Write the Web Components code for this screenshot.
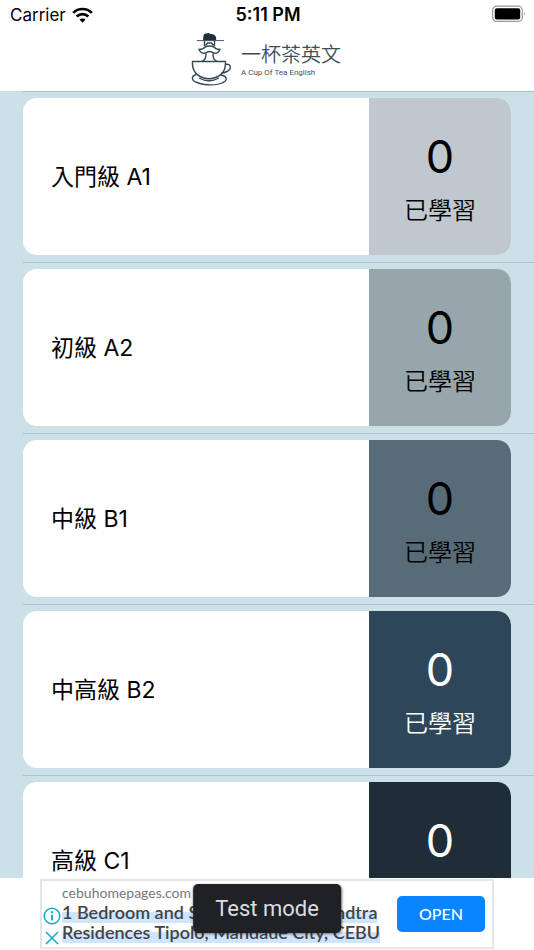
<!DOCTYPE html>
<html lang="zh-Hant">
<head>
<meta charset="utf-8">
<meta name="viewport" content="width=device-width, initial-scale=1">
<title>一杯茶英文</title>
<style>
    html, body{
        height: 100%;
        margin: 0;
    }
    body{
        font-family: Inter, "Noto Sans CJK TC", sans-serif;
        color: #000;
        background-color: #fff;
    }
</style>
</head>
<body>
<tea-app></tea-app>

<template id="status-bar">
    <style>
        :host{
            display: grid;
            grid-template-columns: 1fr auto 1fr;
            align-items: center;
            height: 30px;
            padding: 0 8px 0 10px;
            font-size: 17px;
            line-height: 30px;
        }
        .carrier{
            display: flex;
            align-items: center;
            gap: 6px;
        }
        .time{
            font-size: 18px;
            font-weight: 600;
        }
        .battery{
            justify-self: end;
            margin-bottom: 2px;
        }
        svg{
            display: block;
        }
    </style>
    <div class="carrier">
        <span><slot name="carrier"></slot></span>
        <svg width="21" height="16" viewBox="0 0 22 16" aria-hidden="true">
            <g fill="none" stroke="#000" stroke-width="2.8">
                <path d="M1.2 5.8C6.6.4 15.4.4 20.8 5.8"/>
                <path d="M4.9 9.5c3.4-3.3 8.800-3.300 12.200 0"/>
            </g>
            <path d="M11 16l-3.200-3.200c1.800-1.600 4.600-1.600 6.400 0z"/>
        </svg>
    </div>
    <div class="time"><slot name="time"></slot></div>
    <svg class="battery" width="34" height="18" viewBox="0 0 34 18" aria-hidden="true">
        <rect x=".7" y="1.200" width="29.600" height="15.200" rx="4" fill="none" stroke="#999" stroke-width="1.200"/>
        <rect x="2.800" y="3.200" width="25.400" height="11.200" rx="2"/>
        <path d="M32 6.500q1.800 2.300 0 4.600z" fill="#999"/>
    </svg>
</template>

<template id="brand-header">
    <style>
        :host{
            display: flex;
            justify-content: center;
            gap: 8px;
            height: 61px;
            padding-right: 2px;
            color: #3d4f5a;
        }
        svg{
            display: block;
            margin-top: 3px;
        }
        .name{
            padding-top: 12px;
        }
        h1{
            margin: 0;
            font-size: 20px;
            font-weight: 350;
            line-height: 26px;
        }
        p{
            margin: 0;
            font-family: Roboto, sans-serif;
            font-size: 8px;
            line-height: 10px;
        }
    </style>
    <svg width="42" height="54" viewBox="0 0 42 54" fill="none" stroke="#344852" stroke-width="1.400" aria-hidden="true">
        <!-- hat -->
        <path d="M12 7.500L12.500 2.500q.5-2.500 3-2 2-1 4 .5 3-.5 4.500 1.500 1.800 2 1 5z" fill="#1f303b" stroke="none"/>
        <path d="M6 7.600h27" stroke-width=".9"/>
        <!-- face and moustache -->
        <path d="M13.500 8v5M23.500 8v5M14.500 12.500l2-2.500h4l2 2.500"/>
        <path d="M8 16.500q4 0 6-2.500 4.500-2 9 0 2 2.500 6 2.500-1.500 4-6 3.800-2.500-1.800-4.500-1.800t-4.500 1.800q-4.500.2-6-3.800z"/>
        <!-- neck -->
        <path d="M15 20.500q.5 6-4 8M22 20.500q-.5 6 4 8"/>
        <!-- cup and saucer -->
        <path d="M1.500 28.500h33c.5 9-4.500 14.500-11.500 16.500q-5 1.500-10 0c-7-2-12-7.500-11.500-16.500z"/>
        <path d="M34 31.500c7-1.500 6.500 5 2 7-2 1-4 1.500-5.500 1.500"/>
        <path d="M5.500 41.500C-.5 43 .5 48 6 49.500c7 3.200 20 3.200 26 0 5-2.500 4-6.500-2.500-7.500"/>
        <path d="M8 45q10 5.500 20 0"/>
    </svg>
    <div class="name">
        <h1><slot name="title"></slot></h1>
        <p><slot name="subtitle"></slot></p>
    </div>
</template>

<template id="level-card">
    <style>
        :host{
            display: block;
            margin-left: 23px;
            padding: 6px 23px 7px 0;
            border-top: 1px solid #adbfc7;
        }
        a{
            display: flex;
            height: 157px;
            border-radius: 14px;
            overflow: hidden;
            color: #000;
            background-color: #fff;
            text-decoration: none;
        }
        .level{
            flex: 1;
            align-self: center;
            padding-left: 28px;
            font-size: 23px;
            line-height: 32px;
        }
        .learned{
            display: flex;
            flex-direction: column;
            align-items: center;
            justify-content: center;
            gap: 8px;
            width: 142px;
            padding-top: 4px;
            box-sizing: border-box;
            color: var(--card-text, #000);
            background-color: var(--card-color);
            font-size: 24px;
            font-weight: 350;
            line-height: 36px;
        }
        .count{
            font-size: 45px;
            font-weight: 400;
            line-height: 56px;
        }
    </style>
    <a href="#">
        <span class="level"><slot></slot></span>
        <span class="learned">
            <span class="count"></span>
            <span>已學習</span>
        </span>
    </a>
</template>

<template id="ad-banner">
    <style>
        :host{
            position: relative;
            display: flex;
            justify-content: center;
            padding: 1px 0;
            background-color: #fff;
        }
        .ad{
            display: flex;
            align-items: center;
            box-sizing: border-box;
            width: 85%;
            height: 70px;
            padding-right: 7px;
            border: 2px solid #e6e6e6;
            font-family: Lato, sans-serif;
        }
        .icons{
            display: flex;
            flex-direction: column;
            align-items: center;
            gap: 5px;
            width: 20px;
            padding-top: 24px;
        }
        .icons button{
            padding: 0;
            border: 0;
            background: none;
        }
        svg{
            display: block;
        }
        .copy{
            flex: 1;
            padding-bottom: 2px;
            white-space: nowrap;
        }
        .site{
            color: #777;
            font-size: 14px;
            line-height: 18px;
        }
        .headline{
            color: #444;
            font-size: 18px;
            font-weight: 600;
            line-height: 20px;
        }
        .headline a{
            color: inherit;
            text-decoration: none;
            background: linear-gradient(transparent 50%, #cfe5ff 50%);
            -webkit-box-decoration-break: clone;
            box-decoration-break: clone;
        }
        .open{
            width: 88px;
            height: 36px;
            padding: 0 0 2px;
            border: 0;
            border-radius: 5px;
            color: #fff;
            background-color: #0a84ff;
            font: 500 16px Lato, sans-serif;
        }
        /* sits over the ad */
        .toast{
            position: absolute;
            left: 50%;
            bottom: 17px;
            transform: translateX(-50%);
            padding: 0 22px;
            border-radius: 5px;
            color: #dcdde0;
            background-color: #202125;
            box-shadow: 0 1px 3px rgba(0, 0, 0, .5);
            font-family: Roboto, sans-serif;
            font-size: 22px;
            line-height: 49px;
            white-space: nowrap;
        }
    </style>
    <div class="ad">
        <div class="icons">
            <button aria-label="Ad info">
                <svg width="18" height="18" viewBox="0 0 18 18" fill="none" stroke="#18aecb" stroke-width="1.600">
                    <circle cx="9" cy="9" r="7.800"/>
                    <path d="M9 7.800v5.700M9 4.200v2" stroke-width="2"/>
                </svg>
            </button>
            <button aria-label="Close ad">
                <svg width="16" height="16" viewBox="0 0 16 16" stroke="#18aecb" stroke-width="1.600">
                    <path d="M2 2l12 12M14 2L2 14"/>
                </svg>
            </button>
        </div>
        <div class="copy">
            <div class="site"><slot name="site"></slot></div>
            <div class="headline"><a href="#"><slot name="headline"></slot></a></div>
        </div>
        <button class="open">OPEN</button>
    </div>
    <div class="toast" role="status"><slot name="toast"></slot></div>
</template>

<template id="tea-app">
    <style>
        :host{
            display: flex;
            flex-direction: column;
            height: 100%;
        }
        main{
            flex: 1;
            min-height: 0;
            overflow: hidden;
            background-color: #cce0e7;
        }
    </style>
    <status-bar>
        <span slot="carrier">Carrier</span>
        <span slot="time">5:11 PM</span>
    </status-bar>
    <brand-header>
        <span slot="title">一杯茶英文</span>
        <span slot="subtitle">A Cup Of Tea English</span>
    </brand-header>
    <main>
        <level-card count="0" color="#c0c7ce">入門級 A1</level-card>
        <level-card count="0" color="#97a5ac">初級 A2</level-card>
        <level-card count="0" color="#576c78">中級 B1</level-card>
        <level-card count="0" color="#2d4659" text="#fff">中高級 B2</level-card>
        <level-card count="0" color="#1e2d37" text="#fff">高級 C1</level-card>
    </main>
    <ad-banner>
        <span slot="site">cebuhomepages.com</span>
        <span slot="headline">1 Bedroom and Studio Units in Mandtra<br>Residences Tipolo, Mandaue City, CEBU</span>
        <span slot="toast">Test mode</span>
    </ad-banner>
</template>

<script>
    class TemplateElement extends HTMLElement{
        $(selector){return this.shadowRoot.querySelector(selector)}

        connectedCallback(){
            if(this.shadowRoot) return;
            const template = document.getElementById(this.localName);
            this.attachShadow({mode:'open'});
            this.shadowRoot.appendChild(document.importNode(template.content,true));
            this.update();
        }

        update(){
        }
    }

    class StatusBar extends TemplateElement{}
    class BrandHeader extends TemplateElement{}
    class AdBanner extends TemplateElement{}
    class TeaApp extends TemplateElement{}

    class LevelCard extends TemplateElement{
        static get observedAttributes(){
            return ['count','color','text']
        }

        attributeChangedCallback(){
            if(this.shadowRoot) this.update();
        }

        update(){
            this.$('.count').textContent = this.getAttribute('count');
            this.style.setProperty('--card-color',this.getAttribute('color'));
            this.style.setProperty('--card-text',this.getAttribute('text') || '#000');
        }
    }

    customElements.define('status-bar',StatusBar);
    customElements.define('brand-header',BrandHeader);
    customElements.define('level-card',LevelCard);
    customElements.define('ad-banner',AdBanner);
    customElements.define('tea-app',TeaApp);
</script>
</body>
</html>
